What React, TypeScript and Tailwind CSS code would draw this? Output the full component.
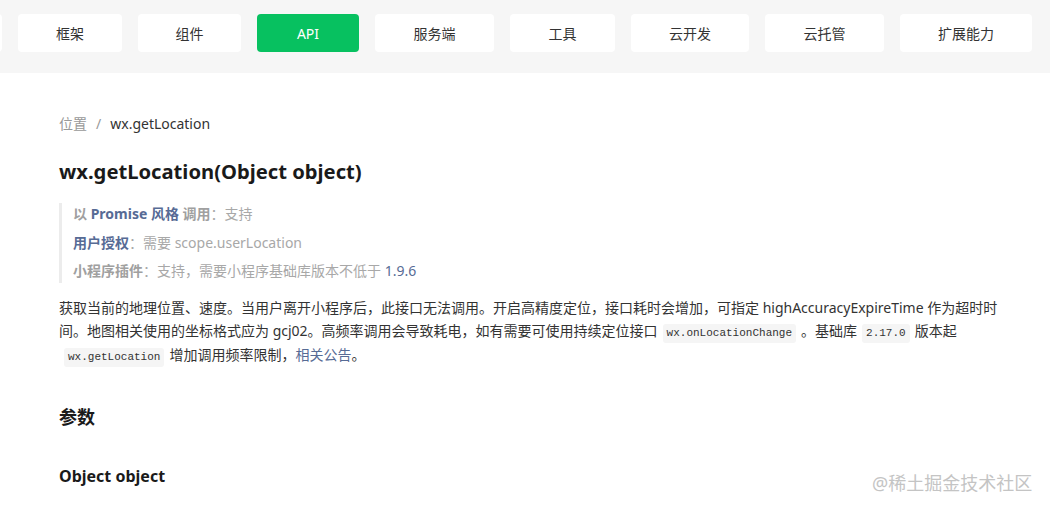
import React from "react";

const tabs = [
  { label: "框架", active: false, w: "w-[104px]" },
  { label: "组件", active: false, w: "w-[103px]" },
  { label: "API", active: true, w: "w-[102px]" },
  { label: "服务端", active: false, w: "w-[119px]" },
  { label: "工具", active: false, w: "w-[105px]" },
  { label: "云开发", active: false, w: "w-[118px]" },
  { label: "云托管", active: false, w: "w-[119px]" },
  { label: "扩展能力", active: false, w: "w-[132px]" },
];

const font = { fontFamily: '"Noto Sans", "Noto Sans CJK SC", sans-serif' };

function Code({ children }: { children: React.ReactNode }) {
  return (
    <code className="mx-[5px] inline-block rounded-[3px] bg-[#f5f5f5] px-[4px] font-['Liberation_Mono',monospace] text-[11px] leading-[19px] text-[#333]">
      {children}
    </code>
  );
}

export default function App() {
  return (
    <div className="relative h-[510px] w-[1050px] overflow-hidden bg-white text-[#333]" style={font}>
      <div className="flex h-[73px] items-start overflow-hidden bg-[#f6f6f6] pt-[14px]">
        <div className="flex gap-[16px] pl-[18px]">
          <div className="-ml-[118px] h-[38px] w-[102px] rounded-[4px] bg-white" />
          {tabs.map((t) => (
            <div
              key={t.label}
              className={
                "flex h-[38px] items-center justify-center rounded-[4px] text-[14px] " +
                t.w +
                " " +
                (t.active ? "bg-[#07c160] text-white" : "bg-white text-[#333]")
              }
            >
              {t.label}
            </div>
          ))}
        </div>
      </div>

      <div className="pl-[59px] pr-[40px]">
        <div className="mt-[40px] flex items-center text-[14px] leading-[22px]">
          <span className="text-[#999]">位置</span>
          <span className="mx-[9px] text-[#999]">/</span>
          <span className="text-[#333]">wx.getLocation</span>
        </div>

        <h1 className="mt-[22px] text-[20.2px] font-bold leading-[28px] text-[#1a1a1a]">
          wx.getLocation(Object object)
        </h1>

        <div className="mt-[18px] flex flex-col gap-[6px] border-l-[3px] border-[#ececec] pl-[11px] text-[14px] leading-[22.5px] text-[#a8a8a8]">
          <div>
            <span className="font-bold text-[#a0a0a0]">以 </span>
            <span className="font-bold text-[#576b95]">Promise 风格</span>
            <span className="font-bold text-[#a0a0a0]"> 调用</span>：支持
          </div>
          <div>
            <span className="font-bold text-[#576b95]">用户授权</span>：需要 scope.userLocation
          </div>
          <div>
            <span className="font-bold text-[#a0a0a0]">小程序插件</span>：支持，需要小程序基础库版本不低于{" "}
            <span className="text-[#576b95]">1.9.6</span>
          </div>
        </div>

        <p className="mt-[13px] w-[950px] text-[14px] leading-[23px] text-[#333]">
          获取当前的地理位置、速度。当用户离开小程序后，此接口无法调用。开启高精度定位，接口耗时会增加，可指定 highAccuracyExpireTime 作为超时时间。地图相关使用的坐标格式应为 gcj02。高频率调用会导致耗电，如有需要可使用持续定位接口
          <Code>wx.onLocationChange</Code>。基础库
          <Code>2.17.0</Code>版本起
          <Code>wx.getLocation</Code>增加调用频率限制，<span className="text-[#576b95]">相关公告</span>。
        </p>

        <h2 className="mt-[37px] text-[18px] font-bold leading-[26px] text-[#1a1a1a]">参数</h2>

        <h3 className="mt-[34px] text-[16px] font-bold leading-[24px] text-[#1a1a1a]">Object object</h3>
      </div>

      <div className="absolute left-[872px] top-[471px] text-[18px] leading-[24px] text-[#c4c4c4]">
        @稀土掘金技术社区
      </div>
    </div>
  );
}
